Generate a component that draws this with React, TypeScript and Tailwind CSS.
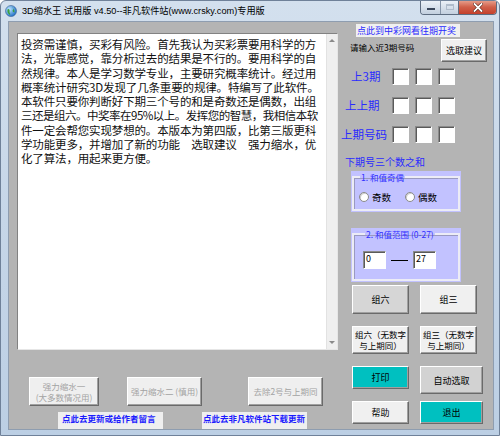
import React from "react";

const cjk = { fontFamily: '"Noto Sans CJK SC", "Liberation Sans", sans-serif' };
const titleFont = { fontFamily: '"Liberation Sans", "Noto Sans CJK SC", sans-serif' };

const lines = [
  "投资需谨慎，买彩有风险。首先我认为买彩票要用科学的方",
  "法，光靠感觉，靠分析过去的结果是不行的。要用科学的自",
  "然规律。本人是学习数学专业，主要研究概率统计。经过用",
  "概率统计研究3D发现了几条重要的规律。特编写了此软件。",
  "本软件只要你判断好下期三个号的和是奇数还是偶数，出组",
  "三还是组六。中奖率在95%以上。发挥您的智慧，我相信本软",
  "件一定会帮您实现梦想的。本版本为第四版，比第三版更科",
  "学功能更多，并增加了新的功能　选取建议　强力缩水，优",
  "化了算法，用起来更方便。",
];

const raised =
  "border border-t-white border-l-white border-b-[#6a6a6a] border-r-[#6a6a6a] shadow-[inset_-1px_-1px_0_#a0a0a0]";
const sunken =
  "border border-t-[#8a8a8a] border-l-[#8a8a8a] border-b-white border-r-white shadow-[inset_1px_1px_0_#5a5a5a] bg-white";

function Btn({ className, children }: { className: string; children: React.ReactNode }) {
  return (
    <div className={`${raised} flex items-center justify-center text-center leading-[11px] whitespace-nowrap ${className}`}>
      {children}
    </div>
  );
}

function NumBoxes() {
  return (
    <div className="flex gap-[6px]">
      <div className={`${sunken} w-[17px] h-[17px]`} />
      <div className={`${sunken} w-[17px] h-[17px]`} />
      <div className={`${sunken} w-[17px] h-[17px]`} />
    </div>
  );
}

function Radio({ label }: { label: string }) {
  return (
    <div className="flex items-center gap-[3px] text-[9.5px] text-black">
      <div className="w-[10px] h-[10px] rounded-full bg-white border border-[#8a8a8a] shadow-[inset_1px_1px_0_#d0d0d0]" />
      <span>{label}</span>
    </div>
  );
}

export default function App() {
  return (
    <div
      style={cjk}
      className="w-[500px] h-[436px] flex flex-col bg-gradient-to-b from-[#d3e0ee] via-[#c6d6e8] to-[#bccfe4] border border-[#6f8199] rounded-t-[6px] overflow-hidden"
    >
      {/* title bar */}
      <div className="h-[20px] flex justify-between shrink-0">
        <div className="flex items-center pl-[4px] gap-[5px] text-[9.2px] text-black" style={titleFont}>
          <svg width="12" height="12" viewBox="0 0 12 12">
            <defs>
              <radialGradient id="g" cx="0.35" cy="0.35" r="0.7">
                <stop offset="0" stopColor="#bfe7ff" />
                <stop offset="1" stopColor="#1f6fc8" />
              </radialGradient>
            </defs>
            <circle cx="6" cy="6" r="5.5" fill="url(#g)" stroke="#3a5f8f" strokeWidth="0.6" />
            <path d="M2.5 4.5 C4 3 5 5 4.5 6.5 C4 8 6 8.5 5 10 C3 9 2 7 2.5 4.5Z" fill="#3aa03a" />
            <path d="M7 2 C8.5 2.5 9 4 8 5 C7.2 5.5 7.5 7 9.5 7.5 C9.5 5 9 3 7 2Z" fill="#3aa03a" />
          </svg>
          <span className="mt-[1px]">3D缩水王 试用版 v4.50--非凡软件站(www.crsky.com)专用版</span>
        </div>
        <div className="flex self-start mr-[2px] -mt-[1px] h-[15px] rounded-b-[4px] overflow-hidden border border-t-0 border-[#5d6c80]">
          <div className="w-[20px] bg-gradient-to-b from-[#eef3f9] to-[#c3d0df] border-r border-[#8594a8] flex items-end justify-center pb-[4px]">
            <div className="w-[8px] h-[2px] bg-white border border-[#39465a]" />
          </div>
          <div className="w-[18px] bg-gradient-to-b from-[#eef3f9] to-[#c3d0df] border-r border-[#5d6c80] flex items-center justify-center">
            <div className="w-[8px] h-[6px] border border-[#b0bccb] border-t-2" />
          </div>
          <div className="w-[37px] bg-gradient-to-b from-[#e8a593] via-[#d0604a] to-[#c4402c] flex items-center justify-center">
            <svg width="10" height="9" viewBox="0 0 10 9">
              <path d="M1.5 1 L8.5 8 M8.5 1 L1.5 8" stroke="#4a1a10" strokeWidth="3" strokeLinecap="square" />
              <path d="M1.5 1 L8.5 8 M8.5 1 L1.5 8" stroke="#ffffff" strokeWidth="1.8" strokeLinecap="square" />
            </svg>
          </div>
        </div>
      </div>

      {/* client area */}
      <div className="ml-[7px] mr-[5px] mb-[5px] flex-1 bg-[#b4b4b4] border border-[#8e9db0] flex">
        {/* left */}
        <div className="w-[331px] shrink-0 flex flex-col">
          <div className="ml-[8px] mt-[11px] w-[321px] h-[317px] border border-t-[#828282] border-l-[#828282] border-b-[#e6e6e6] border-r-[#e6e6e6] flex bg-white">
            <div className="flex-1 pl-[3px] pt-[3px] text-[11.5px] leading-[14.3px] tracking-[-0.15px] text-[#111] whitespace-nowrap overflow-hidden">
              {lines.map((l, i) => (
                <div key={i} className={i === 5 ? "tracking-[-0.5px]" : ""}>
                  {l}
                </div>
              ))}
            </div>
            <div className="w-[11px] bg-[#efefef] border-l border-[#e2e2e2] flex flex-col justify-between items-center py-[5px]">
              <div className="w-0 h-0 border-l-[3px] border-r-[3px] border-b-[3px] border-l-transparent border-r-transparent border-b-[#8a8a8a]" />
              <div className="w-0 h-0 border-l-[3px] border-r-[3px] border-t-[3px] border-l-transparent border-r-transparent border-t-[#8a8a8a]" />
            </div>
          </div>

          <div className="flex mt-[27px] h-[29px] text-[8.5px] text-[#a3a3a3]">
            <Btn className="ml-[20px] w-[70px] bg-[#efefef]">
              <span>
                强力缩水一
                <br />
                (大多数情况用)
              </span>
            </Btn>
            <Btn className="ml-[28px] w-[75px] bg-[#efefef]">强力缩水二 (慎用)</Btn>
            <Btn className="ml-[46px] w-[75px] bg-[#efefef]">去除2号与上期同</Btn>
          </div>

          <div className="flex mt-[6px] h-[17px] text-[8.5px] font-bold text-[#1a1aff] whitespace-nowrap">
            <div className="ml-[49px] w-[105px] bg-[#efefef] pl-[4px] leading-[12px]">点此去更新或给作者留言</div>
            <div className="ml-[39px] w-[105px] bg-[#efefef] pl-[1px] leading-[12px]">点此去非凡软件站下载更新</div>
          </div>
        </div>

        {/* right */}
        <div className="flex-1 flex flex-col">
          <div className="ml-[16px] mt-[2px] w-[104px] h-[13px] bg-[#f0f0f0] text-[9px] leading-[13px] text-[#2a2aff] pl-[1px] whitespace-nowrap">
            点此到中彩网看往期开奖
          </div>

          <div className="flex mt-[2px] h-[23px] items-start">
            <div className="ml-[10px] mt-[1px] text-[8.5px] leading-[14px] text-black whitespace-nowrap">请输入近3期号码</div>
            <Btn className="ml-auto mr-[6px] w-[46px] h-[23px] bg-[#f0f0f0] text-[9px] text-black">选取建议</Btn>
          </div>

          <div className="flex items-center mt-[6px] h-[17px]">
            <div className="w-[52px] pl-[11px] text-[11.5px] text-[#2a2aff]">上3期</div>
            <NumBoxes />
          </div>
          <div className="flex items-center mt-[12px] h-[17px]">
            <div className="w-[52px] pl-[5px] text-[11.5px] text-[#2a2aff]">上上期</div>
            <NumBoxes />
          </div>
          <div className="flex items-center mt-[12px] h-[17px]">
            <div className="w-[52px] pl-[1px] text-[11.5px] text-[#2a2aff] whitespace-nowrap">上期号码</div>
            <NumBoxes />
          </div>

          <div className="ml-[5px] mt-[12px] h-[13px] text-[10px] leading-[13px] text-[#2a2aff]">下期号三个数之和</div>

          <div className="ml-[11px] mt-[3px] w-[110px] h-[41px] bg-[#c2c2ff] pt-[1px] px-[1px] pb-[1px]">
            <fieldset className="h-full border-2 border-[#ececf6] shadow-[inset_1px_1px_0_#9a9ac0] px-[4px]">
              <legend className="ml-[2px] px-[1px] text-[8.5px] leading-[10px] text-[#3030ff]">1. 和值奇偶</legend>
              <div className="flex gap-[14px] mt-[8px] pl-[1px]">
                <Radio label="奇数" />
                <Radio label="偶数" />
              </div>
            </fieldset>
          </div>

          <div className="ml-[11px] mt-[16px] w-[110px] h-[54px] bg-[#c2c2ff] pt-[1px] px-[1px] pb-[1px]">
            <fieldset className="h-full border-2 border-[#ececf6] shadow-[inset_1px_1px_0_#9a9ac0] px-[9px]">
              <legend className="ml-[2px] px-[1px] text-[8.5px] leading-[10px] text-[#3030ff] whitespace-nowrap">2. 和值范围 (0-27)</legend>
              <div className="flex items-center mt-[12px]">
                <div className={`${sunken} w-[23px] h-[18px] text-[9px] leading-[14px] pl-[2px] text-black`}>0</div>
                <div className="w-[17px] h-[1px] bg-black mx-[5px]" />
                <div className={`${sunken} w-[23px] h-[18px] text-[9px] leading-[14px] pl-[2px] text-black`}>27</div>
              </div>
            </fieldset>
          </div>

          <div className="flex mt-[3px] h-[29px] text-[9px] text-black">
            <Btn className="ml-[12px] w-[57px] bg-[#d6d6d6]">组六</Btn>
            <Btn className="ml-[11px] w-[57px] bg-[#f0f0f0]">组三</Btn>
          </div>
          <div className="flex mt-[12px] h-[28px] text-[8.5px] text-black">
            <Btn className="ml-[12px] w-[57px] bg-[#f0f0f0]">
              <span>
                组六（无数字
                <br />
                与上期同）
              </span>
            </Btn>
            <Btn className="ml-[11px] w-[57px] bg-[#f0f0f0]">
              <span>
                组三（无数字
                <br />
                与上期同）
              </span>
            </Btn>
          </div>
          <div className="flex mt-[12px] items-start text-[9px] text-black">
            <Btn className="ml-[12px] w-[57px] h-[23px] bg-[#00c0c0]">打印</Btn>
            <Btn className="ml-[11px] w-[63px] h-[28px] bg-[#d2d2d2]">自动选取</Btn>
          </div>
          <div className="flex mt-[7px] h-[23px] text-[9px] text-black">
            <Btn className="ml-[12px] w-[57px] bg-[#f0f0f0]">帮助</Btn>
            <Btn className="ml-[11px] w-[63px] bg-[#00c0c0]">退出</Btn>
          </div>
        </div>
      </div>
    </div>
  );
}
